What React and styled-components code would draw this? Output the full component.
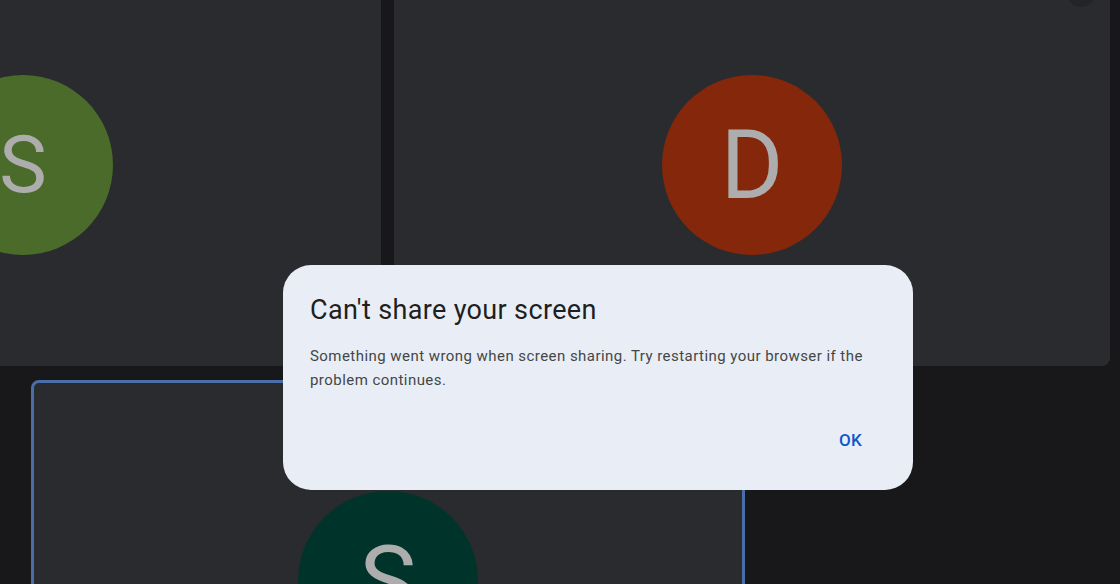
import React from 'react';
import styled, { createGlobalStyle } from 'styled-components';

const GlobalStyle = createGlobalStyle`
    html, body {
        margin: 0;
        padding: 0;
        background: #18181a;
    }
`;

const Stage = styled.div`
    width: 1120px;
    height: 584px;
    position: relative;
    overflow: hidden;
    background: #18181a;
    font-family: Roboto, 'Liberation Sans', sans-serif;
`;

const Rows = styled.div`
    display: flex;
    flex-direction: column;
    gap: 14px;
    margin-top: -36px;
`;

const Row = styled.div`
    display: flex;
    gap: 13px;
    margin-left: ${props => props.offset}px;
`;

const Tile = styled.div`
    width: ${props => props.wide || 716}px;
    height: 402px;
    flex: none;
    box-sizing: border-box;
    position: relative;
    border-radius: 8px;
    background: #2a2b2e;
    border: ${props => props.active ? '3px solid #4a6ea8' : 'none'};
    display: flex;
    align-items: center;
    justify-content: center;
`;

const Avatar = styled.div`
    width: 180px;
    height: 180px;
    border-radius: 50%;
    background: ${props => props.color};
    color: #adadad;
    font-size: ${props => props.size}px;
    line-height: 1;
    display: flex;
    align-items: center;
    justify-content: center;
`;

const MenuDot = styled.div`
    position: absolute;
    top: 15px;
    right: 15px;
    width: 28px;
    height: 28px;
    border-radius: 50%;
    background: #232427;
`;

const Dialog = styled.div`
    position: absolute;
    left: 283px;
    top: 265px;
    width: 630px;
    height: 225px;
    box-sizing: border-box;
    padding: 27px 27px 0 27px;
    border-radius: 28px;
    background: #e9eef6;
    display: flex;
    flex-direction: column;
`;

const Title = styled.div`
    font-size: 27px;
    line-height: 36px;
    letter-spacing: 0.35px;
    color: #1f1f1f;
    margin-bottom: 16px;
`;

const Body = styled.div`
    font-size: 15px;
    line-height: 24px;
    letter-spacing: 0.45px;
    color: #444746;
`;

const Actions = styled.div`
    display: flex;
    justify-content: flex-end;
    margin-top: 38px;
    padding-right: 24px;
`;

const OkButton = styled.button`
    border: none;
    background: none;
    padding: 0;
    font-family: inherit;
    font-size: 17px;
    font-weight: 500;
    letter-spacing: 0.3px;
    color: #0b57d0;
    cursor: pointer;
`;

export default function App() {
    return (
        <Stage>
            <GlobalStyle />
            <Rows>
                <Row offset={-335}>
                    <Tile>
                        <Avatar color="#4a6b29" size={80}>S</Avatar>
                    </Tile>
                    <Tile>
                        <Avatar color="#85270b" size={96}>D</Avatar>
                        <MenuDot />
                    </Tile>
                </Row>
                <Row offset={31}>
                    <Tile active wide={714}>
                        <Avatar color="#00342b" size={96}>S</Avatar>
                    </Tile>
                </Row>
            </Rows>
            <Dialog>
                <Title>Can't share your screen</Title>
                <Body>
                    Something went wrong when screen sharing. Try restarting your browser if the
                    <br />
                    problem continues.
                </Body>
                <Actions>
                    <OkButton>OK</OkButton>
                </Actions>
            </Dialog>
        </Stage>
    );
}
